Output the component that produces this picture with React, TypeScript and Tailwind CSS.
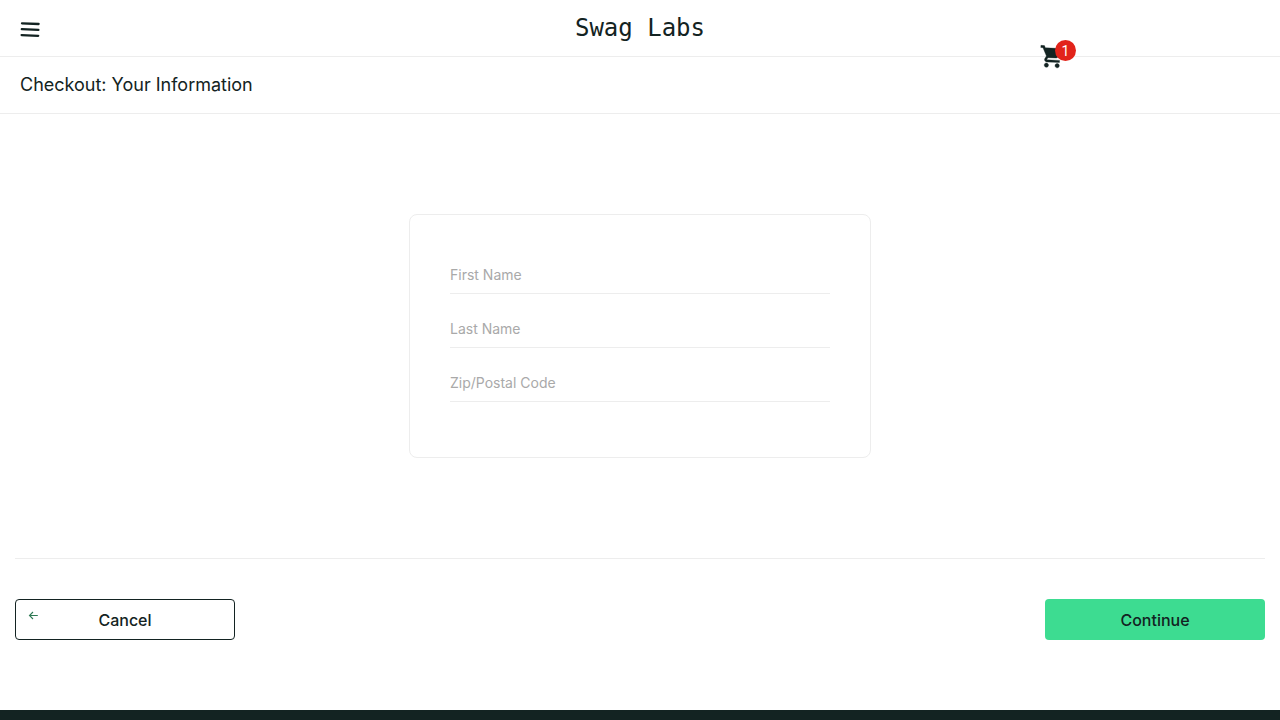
import React from 'react';

const fields = [
  { id: 'first-name', label: 'First Name' },
  { id: 'last-name', label: 'Last Name' },
  { id: 'postal-code', label: 'Zip/Postal Code' },
];

function MenuIcon() {
  return (
    <svg width="20" height="20" viewBox="0 0 20 20" fill="none" stroke="#132322" strokeWidth="2.3" strokeLinecap="round" aria-hidden="true">
      <path d="M2 4.3 18.6 5M1.8 10.2 18.4 10.9M1.6 16.1 18.2 16.8" />
    </svg>
  );
}

function CartIcon() {
  return (
    <svg width="26" height="26" viewBox="0 0 26 26" fill="#132322" stroke="#132322" strokeWidth="0.3" aria-hidden="true">
      <g transform="rotate(3 12 12) translate(-0.7 -0.2) scale(1.08)">
        <path d="M7 18c-1.1 0-1.99.9-1.99 2S5.9 22 7 22s2-.9 2-2-.9-2-2-2zM1 2v2h2l3.6 7.59-1.35 2.45c-.16.28-.25.61-.25.96 0 1.1.9 2 2 2h12v-2H7.42c-.14 0-.25-.11-.25-.25l.03-.12.9-1.63h7.45c.75 0 1.41-.41 1.75-1.03l3.58-6.49c.08-.14.12-.31.12-.48 0-.55-.45-1-1-1H5.21l-.94-2H1zm16 16c-1.1 0-1.99.9-1.99 2s.89 2 1.99 2 2-.9 2-2-.9-2-2-2z" />
      </g>
    </svg>
  );
}

function BackIcon() {
  return (
    <svg width="10" height="9" viewBox="0 0 10 9" fill="none" stroke="#2f7a55" strokeWidth="1.1" aria-hidden="true">
      <path d="M9.8 4.5H1.5M5 1 1.5 4.5 5 8" />
    </svg>
  );
}

export default function App() {
  return (
    <div className="flex min-h-screen flex-col bg-white font-['Inter',sans-serif] text-[#132322]">
      <header>
        <div className="relative grid h-[57px] grid-cols-[1fr_auto_1fr] items-center border-b border-[#ededed] px-5">
          <button type="button" aria-label="Open menu" className="justify-self-start pt-0.5">
            <MenuIcon />
          </button>
          <div className="font-['DejaVu_Sans_Mono',monospace] text-2xl">Swag Labs</div>
          <a href="#cart" aria-label="Cart, 1 item" className="absolute top-10 right-[200px] flex size-10 pt-1">
            <CartIcon />
            <span className="absolute top-0 left-[15px] flex size-[21px] items-center justify-center rounded-full bg-[#e2231a] font-['Roboto',sans-serif] text-sm text-white">1</span>
          </a>
        </div>
        <div className="flex h-[57px] items-center border-b border-[#ededed] px-5">
          <h1 className="text-lg">Checkout: Your Information</h1>
        </div>
      </header>
      <main className="px-[15px] pb-[70px]">
        <form onSubmit={(event) => event.preventDefault()}>
          <div className="py-[100px]">
            <div className="mx-auto max-w-[462px] rounded-lg border border-[#ededed] p-10">
              {fields.map((field) => (
                <div key={field.id} className="mb-[15px]">
                  <input
                    id={field.id}
                    type="text"
                    aria-label={field.label}
                    placeholder={field.label}
                    className="block h-[39px] w-full border-b border-[#ededed] text-sm outline-none placeholder:text-[#a9a9a9]"
                  />
                </div>
              ))}
            </div>
          </div>
          <div className="flex justify-between border-t border-[#ededed] pt-10">
            <button type="button" className="relative h-[41px] w-[220px] rounded border border-[#132322] text-base font-medium">
              <span className="absolute top-[11px] left-3"><BackIcon /></span>
              Cancel
            </button>
            <button type="submit" className="h-[41px] w-[220px] rounded bg-[#3ddc91] text-base font-medium">
              Continue
            </button>
          </div>
        </form>
      </main>
      <footer className="min-h-2.5 grow bg-[#132322]" />
    </div>
  );
}
